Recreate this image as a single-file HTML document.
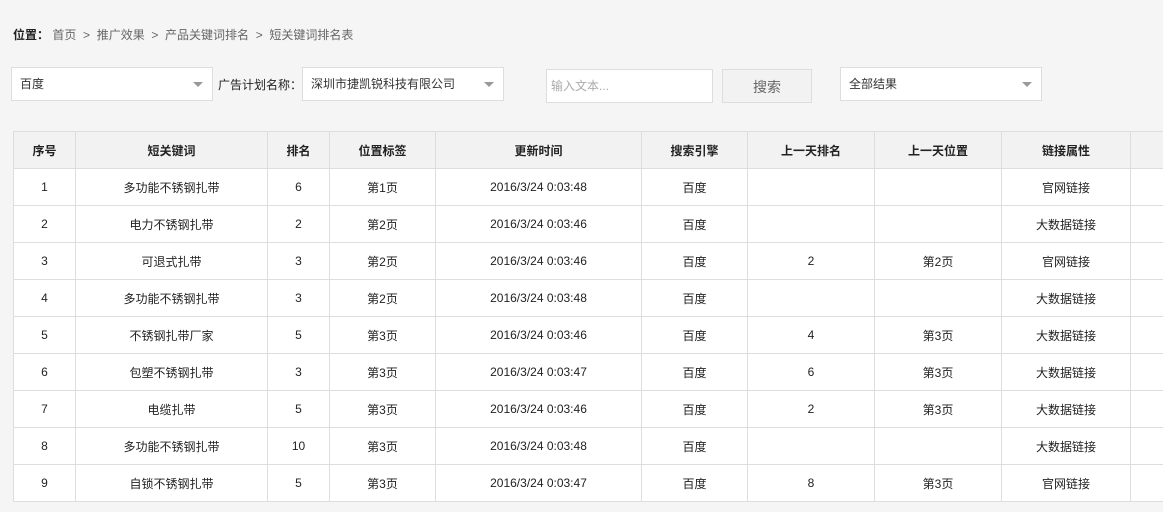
<!DOCTYPE html>
<html><head><meta charset="utf-8"><style>
*{margin:0;padding:0;box-sizing:border-box}
body{width:1163px;height:512px;overflow:hidden;background:#f5f5f5;font-family:"Liberation Sans","Noto Sans CJK SC",sans-serif;font-size:12px;color:#333;position:relative}
.a{position:absolute}
.bc{left:13px;top:26px;color:#666;white-space:nowrap}
.bc b{color:#222;font-weight:bold}
.sel{background:#fff;border:1px solid #ddd;height:34px;line-height:32px;padding-left:8px;color:#333}
.sel:after{content:"";position:absolute;right:9px;top:14px;border-left:5px solid transparent;border-right:5px solid transparent;border-top:5px solid #999}
table{position:absolute;left:13px;top:131px;width:1151px;border-collapse:collapse;background:#fff;table-layout:fixed}
td,th{border:1px solid #ddd;height:37px;text-align:center;font-weight:normal;color:#222}
th{background:#f2f2f2;font-weight:bold}
</style></head><body>
<div class="a bc"><b>位置：</b>&nbsp;首页 &nbsp;&gt;&nbsp; 推广效果 &nbsp;&gt;&nbsp; 产品关键词排名 &nbsp;&gt;&nbsp; 短关键词排名表</div>
<div class="a sel" style="left:11px;top:67px;width:202px">百度</div>
<div class="a" style="left:218px;top:76px;color:#222">广告计划名称：</div>
<div class="a sel" style="left:302px;top:67px;width:202px">深圳市捷凯锐科技有限公司</div>
<div class="a" style="left:546px;top:69px;width:167px;height:34px;background:#fff;border:1px solid #ddd;line-height:32px;padding-left:4px;color:#aaa">输入文本...</div>
<div class="a" style="left:722px;top:69px;width:90px;height:34px;background:#f2f2f2;border:1px solid #ddd;line-height:34px;text-align:center;color:#666;font-size:14px">搜索</div>
<div class="a sel" style="left:840px;top:67px;width:202px">全部结果</div>
<table>
<colgroup><col style="width:62px"><col style="width:192px"><col style="width:62px"><col style="width:106px"><col style="width:206px"><col style="width:106px"><col style="width:127px"><col style="width:127px"><col style="width:129px"><col style="width:34px"></colgroup>
<tr><th>序号</th><th>短关键词</th><th>排名</th><th>位置标签</th><th>更新时间</th><th>搜索引擎</th><th>上一天排名</th><th>上一天位置</th><th>链接属性</th><th></th></tr>
<tr><td>1</td><td>多功能不锈钢扎带</td><td>6</td><td>第1页</td><td>2016/3/24 0:03:48</td><td>百度</td><td></td><td></td><td>官网链接</td><td></td></tr>
<tr><td>2</td><td>电力不锈钢扎带</td><td>2</td><td>第2页</td><td>2016/3/24 0:03:46</td><td>百度</td><td></td><td></td><td>大数据链接</td><td></td></tr>
<tr><td>3</td><td>可退式扎带</td><td>3</td><td>第2页</td><td>2016/3/24 0:03:46</td><td>百度</td><td>2</td><td>第2页</td><td>官网链接</td><td></td></tr>
<tr><td>4</td><td>多功能不锈钢扎带</td><td>3</td><td>第2页</td><td>2016/3/24 0:03:48</td><td>百度</td><td></td><td></td><td>大数据链接</td><td></td></tr>
<tr><td>5</td><td>不锈钢扎带厂家</td><td>5</td><td>第3页</td><td>2016/3/24 0:03:46</td><td>百度</td><td>4</td><td>第3页</td><td>大数据链接</td><td></td></tr>
<tr><td>6</td><td>包塑不锈钢扎带</td><td>3</td><td>第3页</td><td>2016/3/24 0:03:47</td><td>百度</td><td>6</td><td>第3页</td><td>大数据链接</td><td></td></tr>
<tr><td>7</td><td>电缆扎带</td><td>5</td><td>第3页</td><td>2016/3/24 0:03:46</td><td>百度</td><td>2</td><td>第3页</td><td>大数据链接</td><td></td></tr>
<tr><td>8</td><td>多功能不锈钢扎带</td><td>10</td><td>第3页</td><td>2016/3/24 0:03:48</td><td>百度</td><td></td><td></td><td>大数据链接</td><td></td></tr>
<tr><td>9</td><td>自锁不锈钢扎带</td><td>5</td><td>第3页</td><td>2016/3/24 0:03:47</td><td>百度</td><td>8</td><td>第3页</td><td>官网链接</td><td></td></tr>
</table>
</body></html>
